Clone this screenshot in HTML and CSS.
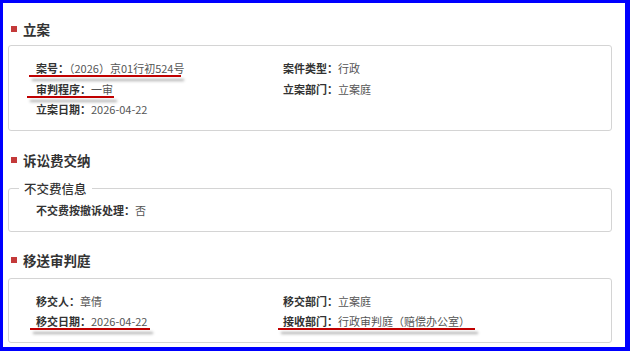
FILE: index.html
```html
<!DOCTYPE html>
<html lang="zh-CN">
<head>
    <meta charset="UTF-8">
    <title>案件信息</title>
    <link rel="stylesheet" href="styles.css">
</head>
<body>
    <div class="frame">
        <!-- 立案 -->
        <h2 class="section-title first">立案</h2>
        <div class="card">
            <div class="grid">
                <div class="row"><span class="mark mark-case"><b>案号：</b>（2026）京01行初524号</span></div>
                <div class="row"><b>案件类型：</b>行政</div>
                <div class="row"><span class="mark mark-level"><b>审判程序：</b>一审</span></div>
                <div class="row"><b>立案部门：</b>立案庭</div>
                <div class="row"><b>立案日期：</b>2026-04-22</div>
            </div>
        </div>

        <!-- 诉讼费交纳 -->
        <h2 class="section-title second">诉讼费交纳</h2>
        <fieldset class="group">
            <legend>不交费信息</legend>
            <div class="row single"><b>不交费按撤诉处理：</b>否</div>
        </fieldset>

        <!-- 移送审判庭 -->
        <h2 class="section-title third">移送审判庭</h2>
        <div class="card">
            <div class="grid">
                <div class="row"><b>移交人：</b>章倩</div>
                <div class="row"><b>移交部门：</b>立案庭</div>
                <div class="row"><span class="mark mark-date"><b>移交日期：</b>2026-04-22</span></div>
                <div class="row"><span class="mark mark-dept"><b>接收部门：</b>行政审判庭（赔偿办公室）</span></div>
            </div>
        </div>
    </div>
</body>
</html>
```

FILE: styles.css
```css
body {
    margin: 0;
    font-family: "Noto Sans CJK SC", "Liberation Sans", sans-serif;
    background-color: #fff;
}

.frame {
    width: 630px;
    height: 351px;
    box-sizing: border-box;
    border-style: solid;
    border-color: #0000ff;
    border-width: 3px 5px 4px 3px;
    padding: 0 13px 0 5px;
    overflow: hidden;
}

.section-title {
    display: flex;
    align-items: center;
    gap: 6px;
    margin: 0;
    padding-left: 3px;
    font-size: 13.5px;
    line-height: 20px;
    font-weight: bold;
    color: #333;
}

.section-title::before {
    content: "";
    width: 6px;
    height: 6px;
    background-color: #c43a3a;
}

.section-title.first {
    margin-top: 16px;
    margin-bottom: 6px;
}

.section-title.second {
    margin-top: 19px;
    margin-bottom: 10px;
}

.section-title.third {
    margin-top: 18px;
    margin-bottom: 8px;
}

.card {
    border: 1px solid #d4d4d4;
    border-radius: 3px;
    padding: 12px 0 10px 27px;
}

.grid {
    display: grid;
    grid-template-columns: 247px 1fr;
}

.row {
    font-size: 11px;
    line-height: 20.5px;
    color: #555;
    white-space: nowrap;
}

.row b {
    color: #333;
}

.group {
    margin: 0;
    border: 1px solid #d4d4d4;
    border-radius: 3px;
    padding: 2px 0 11px 10px;
}

.group legend {
    padding: 0 5px;
    font-size: 12.5px;
    line-height: 18px;
    font-weight: 500;
    color: #333;
}

.row.single {
    padding-left: 17px;
    line-height: 20px;
}

/* hand drawn red underline */
.mark {
    position: relative;
}

.mark::after {
    content: "";
    position: absolute;
    bottom: -1px;
    height: 2px;
    background-color: #c00000;
    box-shadow: 3px 4px 3px rgba(0, 0, 0, 0.35);
}

.mark-case::after {
    left: -7px;
    right: 3px;
}

.mark-level::after {
    left: -9px;
    right: -1px;
}

.mark-date::after {
    left: -6px;
    right: -3px;
}

.mark-dept::after {
    left: -5px;
    right: -5px;
}
```
